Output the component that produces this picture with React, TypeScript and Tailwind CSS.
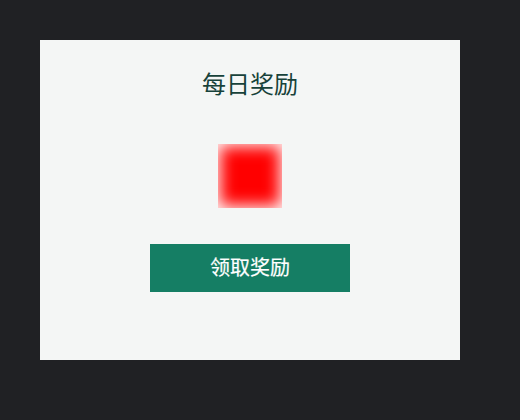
export default function App() {
  return (
    <div className="min-h-[420px] w-[520px] bg-[#202124] p-10 font-['Liberation_Sans','Noto_Sans_CJK_SC',sans-serif]">
      <div className="flex h-[320px] w-[420px] flex-col items-center bg-[#f4f6f5] pt-7">
        <h1 className="text-[24px] leading-[34px] font-normal text-[#17423a]">每日奖励</h1>
        <div className="mt-[42px] h-16 w-16 bg-[#ff0000] shadow-[inset_0_0_16px_2px_#ffffff]" />
        <button className="mt-9 h-12 w-[200px] bg-[#157e64] text-[20px] text-white [-webkit-text-stroke:0.2px_#ffffff]">领取奖励</button>
      </div>
    </div>
  );
}
